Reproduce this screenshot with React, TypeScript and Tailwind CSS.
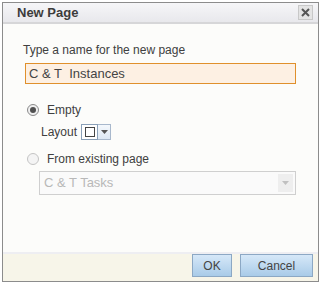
import { type FC } from "react";

const Radio: FC<{ checked?: boolean; disabled?: boolean }> = ({ checked, disabled }) => (
  <span
    className={`flex h-[12px] w-[12px] items-center justify-center rounded-full border ${
      disabled ? "border-[#c4c4c4] bg-[#f4f4f4]" : "border-[#8a8a8a] bg-[#f0f0f0]"
    }`}
  >
    {checked && <span className="h-[6px] w-[6px] rounded-full bg-[#505050]" />}
  </span>
);

const Arrow: FC<{ color: string }> = ({ color }) => (
  <svg width="7" height="4" viewBox="0 0 7 4">
    <path d="M0 0h7L3.5 4z" fill={color} />
  </svg>
);

export default function App() {
  return (
    <div
      className="h-[283px] w-[321px] bg-white text-[12px] text-[#333]"
      style={{ fontFamily: '"Liberation Sans", Arial, sans-serif' }}
    >
      <div className="ml-[2px] mt-[2px] flex h-[280px] w-[317px] flex-col border border-[#8c8c8c] bg-[#fcfcfa]">
        {/* title bar */}
        <div className="flex h-[21px] items-center justify-between border-b-2 border-[#d6d6d8] bg-gradient-to-b from-[#f6f6f8] to-[#e8e8ec] pl-[14px] pr-[5px]">
          <span className="text-[13px] font-bold text-[#3c3c3c]">New Page</span>
          <span className="flex h-[15px] w-[15px] items-center justify-center border border-[#c8c8c8] bg-[#e4e4e4]">
            <svg width="9" height="9" viewBox="0 0 9 9">
              <path d="M1 1l7 7M8 1L1 8" stroke="#555" strokeWidth="2" />
            </svg>
          </span>
        </div>

        {/* body */}
        <div className="flex flex-1 flex-col pl-[20px] pr-[22px] pt-[18px]">
          <div className="leading-[16px] text-[#404040]">Type a name for the new page</div>
          <div className="ml-[2px] mt-[5px] flex h-[21px] items-center border border-[#e0902c] bg-[#fdf0e3] pl-[3px] text-[13px] text-[#444]">
            C &amp; T&nbsp; Instances
          </div>

          <div className="mt-[17px] flex items-center gap-[8px] pl-[4px]">
            <Radio checked />
            <span className="text-[#404040]">Empty</span>
          </div>
          <div className="mt-[4px] flex items-center gap-[4px] pl-[18px]">
            <span className="text-[#404040]">Layout</span>
            <div className="flex h-[16px]">
              <div className="flex w-[17px] items-center justify-center border border-[#8aa0b8] bg-white">
                <span className="h-[10px] w-[10px] border border-[#444]" />
              </div>
              <div className="flex w-[13px] items-center justify-center border border-l-0 border-[#a8b8cc] bg-gradient-to-b from-[#f4f8fc] to-[#dde8f4]">
                <Arrow color="#555" />
              </div>
            </div>
          </div>

          <div className="mt-[9px] flex items-center gap-[8px] pl-[4px]">
            <Radio disabled />
            <span className="text-[#404040]">From existing page</span>
          </div>
          <div className="ml-[16px] mt-[3px] flex h-[24px] items-center justify-between border border-[#cfcfcf] bg-[#fafafa] pl-[4px] pr-[2px]">
            <span className="text-[13px] text-[#b8b8b8]">C &amp; T Tasks</span>
            <span className="flex h-[18px] w-[15px] items-center justify-center bg-[#eeeeee]">
              <Arrow color="#c0c0c0" />
            </span>
          </div>
        </div>

        {/* footer */}
        <div className="flex h-[29px] items-start justify-end gap-[8px] border-t-2 border-[#eeeef2] bg-[#f7f5e9] pr-[5px]">
          <button className="h-[23px] w-[40px] border border-[#8ca8c4] bg-gradient-to-b from-[#d6e8f8] to-[#a9cbe8] text-[12px] text-[#444]">
            OK
          </button>
          <button className="h-[23px] w-[73px] border border-[#8ca8c4] bg-gradient-to-b from-[#d6e8f8] to-[#a9cbe8] text-[12px] text-[#444]">
            Cancel
          </button>
        </div>
      </div>
    </div>
  );
}
